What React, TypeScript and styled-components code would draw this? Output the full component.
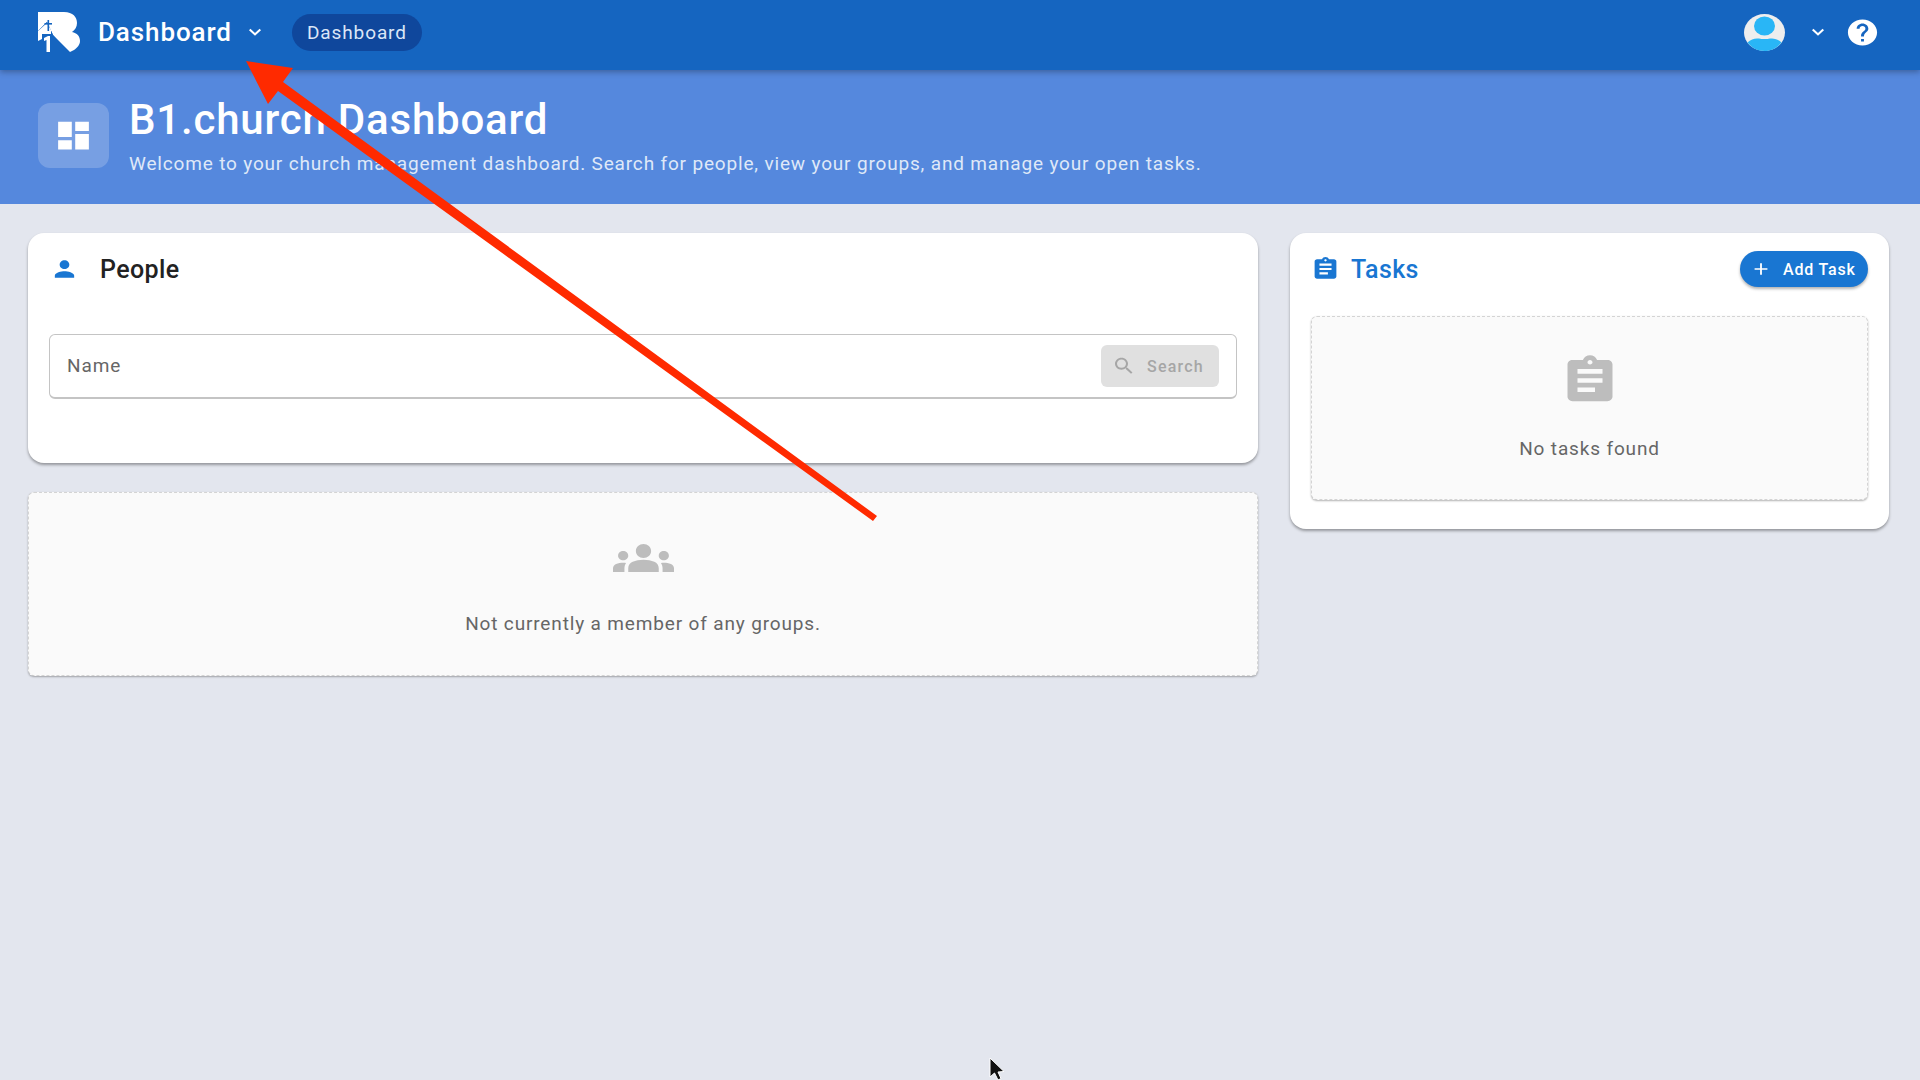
import styled, { createGlobalStyle } from 'styled-components';

const ICONS = {
  person: 'M12 12c2.21 0 4-1.79 4-4s-1.79-4-4-4-4 1.79-4 4 1.79 4 4 4zm0 2c-2.67 0-8 1.34-8 4v2h16v-2c0-2.66-5.33-4-8-4z',
  dashboard: 'M3 13h8V3H3v10zm0 8h8v-6H3v6zm10 0h8V11h-8v10zm0-18v6h8V3h-8z',
  assignment:
    'M19 3h-4.18C14.4 1.84 13.3 1 12 1c-1.3 0-2.4.84-2.82 2H5c-1.1 0-2 .9-2 2v14c0 1.1.9 2 2 2h14c1.1 0 2-.9 2-2V5c0-1.1-.9-2-2-2zm-7 0c.55 0 1 .45 1 1s-.45 1-1 1-1-.45-1-1 .45-1 1-1zm2 14H7v-2h7v2zm3-4H7v-2h10v2zm0-4H7V7h10v2z',
  groups:
    'M12 12.75c1.63 0 3.07.39 4.24.9 1.08.48 1.76 1.56 1.76 2.73V18H6v-1.61c0-1.18.68-2.26 1.76-2.73 1.17-.52 2.61-.91 4.24-.91zM4 13c1.1 0 2-.9 2-2s-.9-2-2-2-2 .9-2 2 .9 2 2 2zm1.13 1.1c-.37-.06-.74-.1-1.13-.1-.99 0-1.93.21-2.78.58C.48 14.9 0 15.62 0 16.43V18h4.5v-1.61c0-.83.23-1.61.63-2.29zM20 13c1.1 0 2-.9 2-2s-.9-2-2-2-2 .9-2 2 .9 2 2 2zm4 3.43c0-.81-.48-1.53-1.22-1.85-.85-.37-1.79-.58-2.78-.58-.39 0-.76.04-1.13.1.4.68.63 1.46.63 2.29V18H24v-1.57zM12 6c1.66 0 3 1.34 3 3s-1.34 3-3 3-3-1.34-3-3 1.34-3 3-3z',
  help: 'M12 2C6.48 2 2 6.48 2 12s4.48 10 10 10 10-4.48 10-10S17.52 2 12 2zm1 17h-2v-2h2v2zm2.07-7.75l-.9.92C13.45 12.9 13 13.5 13 15h-2v-.5c0-1.1.45-2.1 1.17-2.83l1.24-1.26c.37-.36.59-.86.59-1.41 0-1.1-.9-2-2-2s-2 .9-2 2H8c0-2.21 1.79-4 4-4s4 1.79 4 4c0 .88-.36 1.68-.93 2.25z',
  search:
    'M15.5 14h-.79l-.28-.27C15.41 12.59 16 11.11 16 9.5 16 5.91 13.09 3 9.5 3S3 5.91 3 9.5 5.91 16 9.5 16c1.61 0 3.09-.59 4.23-1.57l.27.28v.79l5 4.99L20.49 19l-4.99-5zm-6 0C7.01 14 5 11.99 5 9.5S7.01 5 9.5 5 14 7.01 14 9.5 11.99 14 9.5 14z',
  add: 'M19 13h-6v6h-2v-6H5v-2h6V5h2v6h6v2z',
  expand: 'M16.59 8.59 12 13.17 7.41 8.59 6 10l6 6 6-6z',
};

const GlobalStyle = createGlobalStyle`
  html, body {
    margin: 0;
    padding: 0;
    height: 100%;
    background: #e3e6ee;
    font-family: Roboto, "Liberation Sans", sans-serif;
    overflow: hidden;
  }
`;

const Page = styled.div`
  position: relative;
  width: 1920px;
  height: 1080px;
  overflow: hidden;
`;

const TopBar = styled.header`
  position: relative;
  z-index: 2;
  display: flex;
  align-items: center;
  height: 70px;
  padding: 0 40px 6px 38px;
  box-sizing: border-box;
  background: #1565c0;
  color: #fff;
  box-shadow: 0 2px 6px rgba(0, 0, 0, 0.3);
`;

const AppTitle = styled.div`
  margin-left: 18px;
  font-size: 26px;
  font-weight: 500;
  letter-spacing: 0.9px;
`;

const MenuPill = styled.div`
  margin-left: 25px;
  height: 37px;
  padding: 0 15px;
  display: flex;
  align-items: center;
  border-radius: 19px;
  background: #0f479c;
  color: #dbe6f7;
  font-size: 19px;
  letter-spacing: 0.9px;
`;

const Spacer = styled.div`
  flex: 1;
`;

const Icon = styled.svg<{ $w: number; $h: number; $color: string; $ml?: number }>`
  display: block;
  flex: none;
  width: ${(p) => p.$w}px;
  height: ${(p) => p.$h}px;
  margin-left: ${(p) => p.$ml ?? 0}px;
  fill: ${(p) => p.$color};
`;

const Banner = styled.section`
  display: flex;
  align-items: center;
  height: 134px;
  padding: 0 38px 3px 38px;
  box-sizing: border-box;
  background: #5588dd;
  color: #fff;
`;

const BannerIcon = styled.div`
  flex: none;
  display: flex;
  align-items: center;
  justify-content: center;
  width: 71px;
  height: 65px;
  border-radius: 12px;
  background: rgba(255, 255, 255, 0.2);
`;

const BannerText = styled.div`
  margin-left: 20px;
`;

const BannerTitle = styled.h1`
  margin: 0;
  font-size: 42px;
  line-height: 50px;
  font-weight: 500;
  letter-spacing: 0.8px;
`;

const BannerSub = styled.p`
  margin: 6px 0 0;
  font-size: 19px;
  line-height: 26px;
  letter-spacing: 0.83px;
  color: #dfe8f8;
`;

const Main = styled.main`
  display: grid;
  grid-template-columns: 1230px 599px;
  column-gap: 32px;
  align-items: start;
  padding: 29px 31px 0 28px;
`;

const Column = styled.div`
  display: flex;
  flex-direction: column;
  gap: 29px;
`;

const Card = styled.section<{ $height: number }>`
  height: ${(p) => p.$height}px;
  box-sizing: border-box;
  padding: 21px 21px 0;
  border-radius: 16px;
  background: #fff;
  box-shadow: 0 2px 3px rgba(0, 0, 0, 0.35);
`;

const CardHeader = styled.div`
  display: flex;
  align-items: center;
  height: 30px;
`;

const CardTitle = styled.h2<{ $color: string; $ml: number }>`
  margin: 0 0 0 ${(p) => p.$ml}px;
  font-size: 25px;
  font-weight: 500;
  letter-spacing: 0.4px;
  color: ${(p) => p.$color};
`;

const SearchField = styled.div`
  margin-top: 50px;
  height: 65px;
  box-sizing: border-box;
  display: flex;
  align-items: center;
  justify-content: space-between;
  padding: 0 17px;
  border: 1px solid #c4c4c4;
  border-bottom-width: 2px;
  border-radius: 6px;
`;

const Placeholder = styled.span`
  margin-bottom: 2px;
  font-size: 19px;
  letter-spacing: 0.9px;
  color: #666;
`;

const SearchButton = styled.div`
  display: flex;
  align-items: center;
  gap: 11px;
  width: 118px;
  height: 42px;
  box-sizing: border-box;
  padding-left: 11px;
  border-radius: 6px;
  background: #e0e0e0;
  color: #a6a6a6;
  font-size: 16px;
  font-weight: 500;
  letter-spacing: 1.2px;
`;

const AddButton = styled.div`
  display: flex;
  align-items: center;
  gap: 11px;
  width: 128px;
  height: 36px;
  box-sizing: border-box;
  padding-left: 10px;
  border-radius: 18px;
  background: #1976d2;
  color: #fff;
  font-size: 16px;
  font-weight: 500;
  letter-spacing: 0.8px;
  box-shadow: 0 2px 3px rgba(0, 0, 0, 0.3);
`;

const EmptyBox = styled.div<{ $height: number; $top?: number; $gap: number }>`
  height: ${(p) => p.$height}px;
  margin-top: ${(p) => p.$top ?? 0}px;
  box-sizing: border-box;
  display: flex;
  flex-direction: column;
  align-items: center;
  justify-content: center;
  gap: ${(p) => p.$gap}px;
  padding-bottom: 4px;
  border: 1px dashed #d4d4d4;
  border-radius: 6px;
  background: #fafafa;
  box-shadow: 0 1px 2px rgba(0, 0, 0, 0.3);
`;

const EmptyText = styled.p`
  margin: 0;
  font-size: 19px;
  letter-spacing: 0.85px;
  color: #666;
`;

const Overlay = styled.svg`
  position: absolute;
  top: 0;
  left: 0;
  z-index: 5;
  width: 1920px;
  height: 1080px;
  pointer-events: none;
`;

function MuiIcon({ name, w, h, color, ml }: { name: keyof typeof ICONS; w: number; h: number; color: string; ml?: number }) {
  return (
    <Icon $w={w} $h={h} $color={color} $ml={ml} viewBox="0 0 24 24" preserveAspectRatio="none">
      <path d={ICONS[name]} />
    </Icon>
  );
}

export default function App() {
  return (
    <Page>
      <GlobalStyle />
      <TopBar>
        <svg width="42" height="40" viewBox="0 0 42 40">
          <path
            d="M0 0H26C35 0 39 5 39 11C39 15 37 18 34 20C39 21 42 24 42 29C42 33 39 36 36 38L32 40L15 23L9 10L0 19Z"
            fill="#fff"
          />
          <path d="M0 19L9 10L15 23L30 40H0Z" fill="#1565c0" />
          <path d="M0 19L9 11L13 18V22H4V27L0 29Z" fill="#fff" />
          <rect x="9.5" y="8" width="1.6" height="11" fill="#1565c0" />
          <rect x="6.5" y="11" width="7.5" height="1.6" fill="#1565c0" />
          <path d="M6 26L10 24H12V40H8.500V28L6 29Z" fill="#fff" />
        </svg>
        <AppTitle>Dashboard</AppTitle>
        <MuiIcon name="expand" w={24} h={22} color="#fff" ml={11} />
        <MenuPill>Dashboard</MenuPill>
        <Spacer />
        <svg width="41" height="37" viewBox="0 0 41 37">
          <ellipse cx="20.5" cy="18.5" rx="20.5" ry="18.5" fill="#eeeeee" />
          <ellipse cx="20.5" cy="12" rx="10.5" ry="9.5" fill="#29b6f6" />
          <path d="M3.5 28.5C7 25 11 24 15 24.5C18 25.2 23 25.2 26 24.5C30 24 34 25 37.5 28.5C33.5 33.5 27.5 37 20.5 37C13.5 37 7.5 33.500 3.5 28.5Z" fill="#29b6f6" />
        </svg>
        <MuiIcon name="expand" w={24} h={22} color="#fff" ml={21} />
        <MuiIcon name="help" w={35} h={31} color="#fff" ml={15} />
      </TopBar>
      <Banner>
        <BannerIcon>
          <MuiIcon name="dashboard" w={41} h={37} color="#fff" />
        </BannerIcon>
        <BannerText>
          <BannerTitle>B1.church Dashboard</BannerTitle>
          <BannerSub>Welcome to your church management dashboard. Search for people, view your groups, and manage your open tasks.</BannerSub>
        </BannerText>
      </Banner>
      <Main>
        <Column>
          <Card $height={230}>
            <CardHeader>
              <MuiIcon name="person" w={29} h={26} color="#1976d2" ml={1} />
              <CardTitle $color="#222" $ml={21}>People</CardTitle>
            </CardHeader>
            <SearchField>
              <Placeholder>Name</Placeholder>
              <SearchButton>
                <MuiIcon name="search" w={24} h={22} color="#a6a6a6" />
                Search
              </SearchButton>
            </SearchField>
          </Card>
          <EmptyBox $height={184} $gap={26}>
            <MuiIcon name="groups" w={61} h={56} color="#bdbdbd" />
            <EmptyText>Not currently a member of any groups.</EmptyText>
          </EmptyBox>
        </Column>
        <Card $height={296}>
          <CardHeader>
            <MuiIcon name="assignment" w={29} h={26} color="#1976d2" ml={0} />
            <CardTitle $color="#1976d2" $ml={11}>Tasks</CardTitle>
            <Spacer />
            <AddButton>
              <MuiIcon name="add" w={22} h={20} color="#fff" />
              Add Task
            </AddButton>
          </CardHeader>
          <EmptyBox $height={184} $top={32} $gap={29}>
            <MuiIcon name="assignment" w={60} h={55} color="#bdbdbd" />
            <EmptyText>No tasks found</EmptyText>
          </EmptyBox>
        </Card>
      </Main>
      <Overlay viewBox="0 0 1920 1080">
        <path d="M246 61L293 68L283 82L877 516L873 521L278 91L268 104Z" fill="#ff2a00" />
        <path d="M990 1058V1077L994.500 1073L998 1080L1001 1078.500L998 1072L1004 1071.500Z" fill="#111" stroke="#fff" strokeWidth="1" />
      </Overlay>
    </Page>
  );
}
